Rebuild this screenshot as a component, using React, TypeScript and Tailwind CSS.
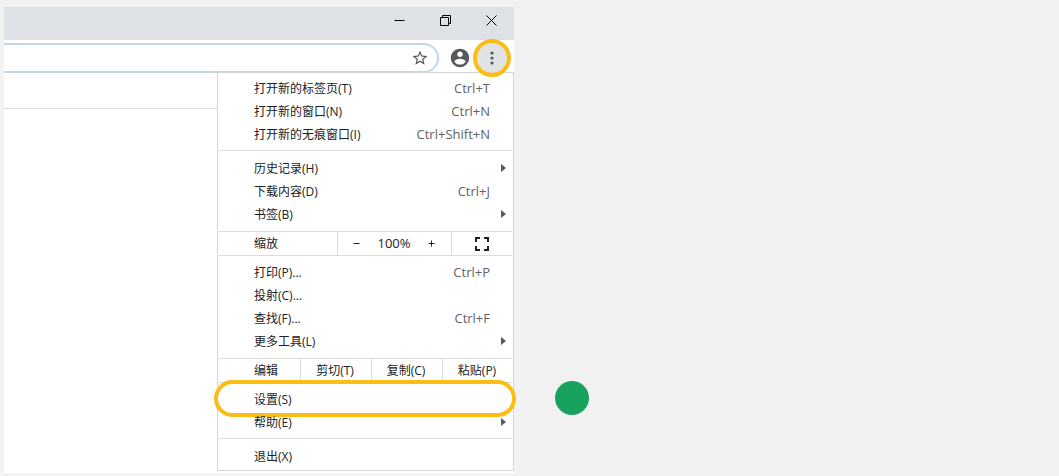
import type { ReactNode } from 'react'

type Item = {
  label: string
  shortcut?: string
  submenu?: boolean
  highlighted?: boolean
}

function MenuItem({ label, shortcut, submenu, highlighted }: Item) {
  return (
    <li className="relative">
      <button type="button" className="flex h-[23px] w-full items-center pr-[23px] pl-9 text-left">
        <span className="flex-1">{label}</span>
        {shortcut && <span className="text-[13px] text-[#5f6368]">{shortcut}</span>}
      </button>
      {submenu && (
        <svg className="absolute top-[7px] right-[7px] h-2 w-[5px]" viewBox="0 0 5 8" fill="#55585c">
          <path d="M0 0L5 4L0 8Z" />
        </svg>
      )}
      {highlighted && (
        <span className="pointer-events-none absolute -top-2 -right-[3px] -bottom-1.5 -left-1 rounded-full border-4 border-[#fbbc14]" />
      )}
    </li>
  )
}

function MenuGroup({ items, className }: { items: Item[]; className: string }) {
  return (
    <ul className={className}>
      {items.map((item) => (
        <MenuItem key={item.label} {...item} />
      ))}
    </ul>
  )
}

function Divider() {
  return <hr className="mx-px border-t border-[#dadcde]" />
}

function EditButton({ children }: { children: ReactNode }) {
  return (
    <button type="button" className="h-full w-[71px] border-l border-[#dadcde] pr-0.5">
      {children}
    </button>
  )
}

function TitleBar() {
  return (
    <header className="flex h-[33px] items-start justify-end bg-[#dee1e6] text-black">
      <button type="button" aria-label="最小化" className="flex h-[26px] w-[46px] items-center justify-center">
        <svg className="h-[11px] w-[11px]" viewBox="0 0 11 11" fill="none" stroke="currentColor">
          <path d="M0.5 5.5H10.5" />
        </svg>
      </button>
      <button type="button" aria-label="还原" className="flex h-[26px] w-[46px] items-center justify-center">
        <svg className="h-[11px] w-[11px]" viewBox="0 0 11 11" fill="none" stroke="currentColor">
          <path d="M0.5 2.5H8.5V10.5H0.5ZM2.5 2.5V0.5H10.5V8.5H8.5" />
        </svg>
      </button>
      <button type="button" aria-label="关闭" className="flex h-[26px] w-[46px] items-center justify-center">
        <svg className="h-[11px] w-[11px]" viewBox="0 0 11 11" fill="none" stroke="currentColor">
          <path d="M0.5 0.5L10.5 10.5M10.5 0.5L0.5 10.5" />
        </svg>
      </button>
    </header>
  )
}

function Toolbar() {
  return (
    <div className="flex h-[33px] items-end bg-white text-[#55585c]">
      <div className="flex h-[30px] flex-1 items-center rounded-r-full border-y-2 border-r-2 border-[#c3d6e9] pr-2">
        <input aria-label="地址栏" className="h-full min-w-0 flex-1 bg-transparent px-2 outline-none" />
        <button type="button" aria-label="添加书签">
          <svg className="h-[18px] w-[18px]" viewBox="0 0 24 24" fill="currentColor">
            <path d="M22 9.24l-7.19-.62L12 2 9.19 8.63 2 9.24l5.46 4.73L5.82 21 12 17.27 18.18 21l-1.63-7.03L22 9.24zM12 15.4l-3.76 2.27 1-4.28-3.32-2.88 4.38-.38L12 6.1l1.71 4.04 4.38.38-3.32 2.88 1 4.28L12 15.4z" />
          </svg>
        </button>
      </div>
      <button type="button" aria-label="用户" className="ml-[10px] flex h-[30px] items-center">
        <svg className="h-[22px] w-[22px]" viewBox="0 0 24 24" fill="currentColor">
          <path d="M12 2C6.48 2 2 6.48 2 12s4.48 10 10 10 10-4.48 10-10S17.52 2 12 2zm0 3c1.66 0 3 1.34 3 3s-1.34 3-3 3-3-1.34-3-3 1.34-3 3-3zm0 14.2c-2.5 0-4.71-1.28-6-3.22.03-1.99 4-3.08 6-3.08 1.99 0 5.97 1.09 6 3.08-1.29 1.94-3.5 3.22-6 3.22z" />
        </svg>
      </button>
      <button
        type="button"
        aria-label="菜单"
        className="relative mr-[7px] ml-1.5 flex h-[30px] w-[30px] items-center justify-center rounded-full bg-[#e1e2e4]"
      >
        <svg className="h-[14px] w-1" viewBox="0 0 4 14" fill="currentColor">
          <circle cx="2" cy="2" r="1.6" />
          <circle cx="2" cy="7" r="1.6" />
          <circle cx="2" cy="12" r="1.6" />
        </svg>
        <span className="pointer-events-none absolute -inset-1 z-10 rounded-full border-4 border-[#fbbc14]" />
      </button>
    </div>
  )
}

function Menu() {
  return (
    <nav className="-mt-px w-[297px] border border-[#d3d6d9] bg-white">
      <MenuGroup
        className="py-1"
        items={[
          { label: '打开新的标签页(T)', shortcut: 'Ctrl+T' },
          { label: '打开新的窗口(N)', shortcut: 'Ctrl+N' },
          { label: '打开新的无痕窗口(I)', shortcut: 'Ctrl+Shift+N' },
        ]}
      />
      <Divider />
      <MenuGroup
        className="pt-1.5 pb-[5px]"
        items={[
          { label: '历史记录(H)', submenu: true },
          { label: '下载内容(D)', shortcut: 'Ctrl+J' },
          { label: '书签(B)', submenu: true },
        ]}
      />
      <Divider />
      <div className="flex h-[23px] items-center pl-9">
        <span className="flex-1">缩放</span>
        <div className="flex h-full w-[114px] items-center justify-between border-l border-[#dadcde] pr-4 pl-[15px]">
          <button type="button" aria-label="缩小">
            <svg className="h-[7px] w-[7px]" viewBox="0 0 7 7" stroke="currentColor">
              <path d="M0.5 3.5H6.5" />
            </svg>
          </button>
          <span className="text-[13px]">100%</span>
          <button type="button" aria-label="放大">
            <svg className="h-[7px] w-[7px]" viewBox="0 0 7 7" stroke="currentColor">
              <path d="M0.5 3.5H6.5M3.5 0.5V6.5" />
            </svg>
          </button>
        </div>
        <button
          type="button"
          aria-label="全屏"
          className="flex h-full w-[62px] items-center justify-center border-l border-[#dadcde] pr-0.5"
        >
          <svg className="h-[14px] w-[14px]" viewBox="0 0 14 14" fill="none" stroke="currentColor" strokeWidth="2">
            <path d="M1 5V1H5M9 1H13V5M13 9V13H9M5 13H1V9" />
          </svg>
        </button>
      </div>
      <Divider />
      <MenuGroup
        className="py-[5px]"
        items={[
          { label: '打印(P)...', shortcut: 'Ctrl+P' },
          { label: '投射(C)...' },
          { label: '查找(F)...', shortcut: 'Ctrl+F' },
          { label: '更多工具(L)', submenu: true },
        ]}
      />
      <Divider />
      <div className="flex h-[23px] items-center pl-9">
        <span className="flex-1">编辑</span>
        <EditButton>剪切(T)</EditButton>
        <EditButton>复制(C)</EditButton>
        <EditButton>粘贴(P)</EditButton>
      </div>
      <Divider />
      <MenuGroup
        className="pt-[5px] pb-1"
        items={[
          { label: '设置(S)', highlighted: true },
          { label: '帮助(E)', submenu: true },
        ]}
      />
      <Divider />
      <MenuGroup className="pt-1.5 pb-0.5" items={[{ label: '退出(X)' }]} />
    </nav>
  )
}

export default function App() {
  return (
    <main className="flex min-h-screen items-start bg-[#f2f2f2] pt-[7px] pl-1 font-['Open_Sans','Noto_Sans_CJK_SC',sans-serif] text-xs text-[#202124]">
      <section className="w-full max-w-[510px] bg-white pb-0.5">
        <TitleBar />
        <Toolbar />
        <div className="flex">
          <div className="flex-1">
            <div className="h-9 border-b border-[#dadcde]" />
          </div>
          <Menu />
        </div>
      </section>
      <div className="mb-[61px] ml-[41px] h-[34px] w-[34px] shrink-0 self-end rounded-full bg-[#18a15f]" />
    </main>
  )
}
